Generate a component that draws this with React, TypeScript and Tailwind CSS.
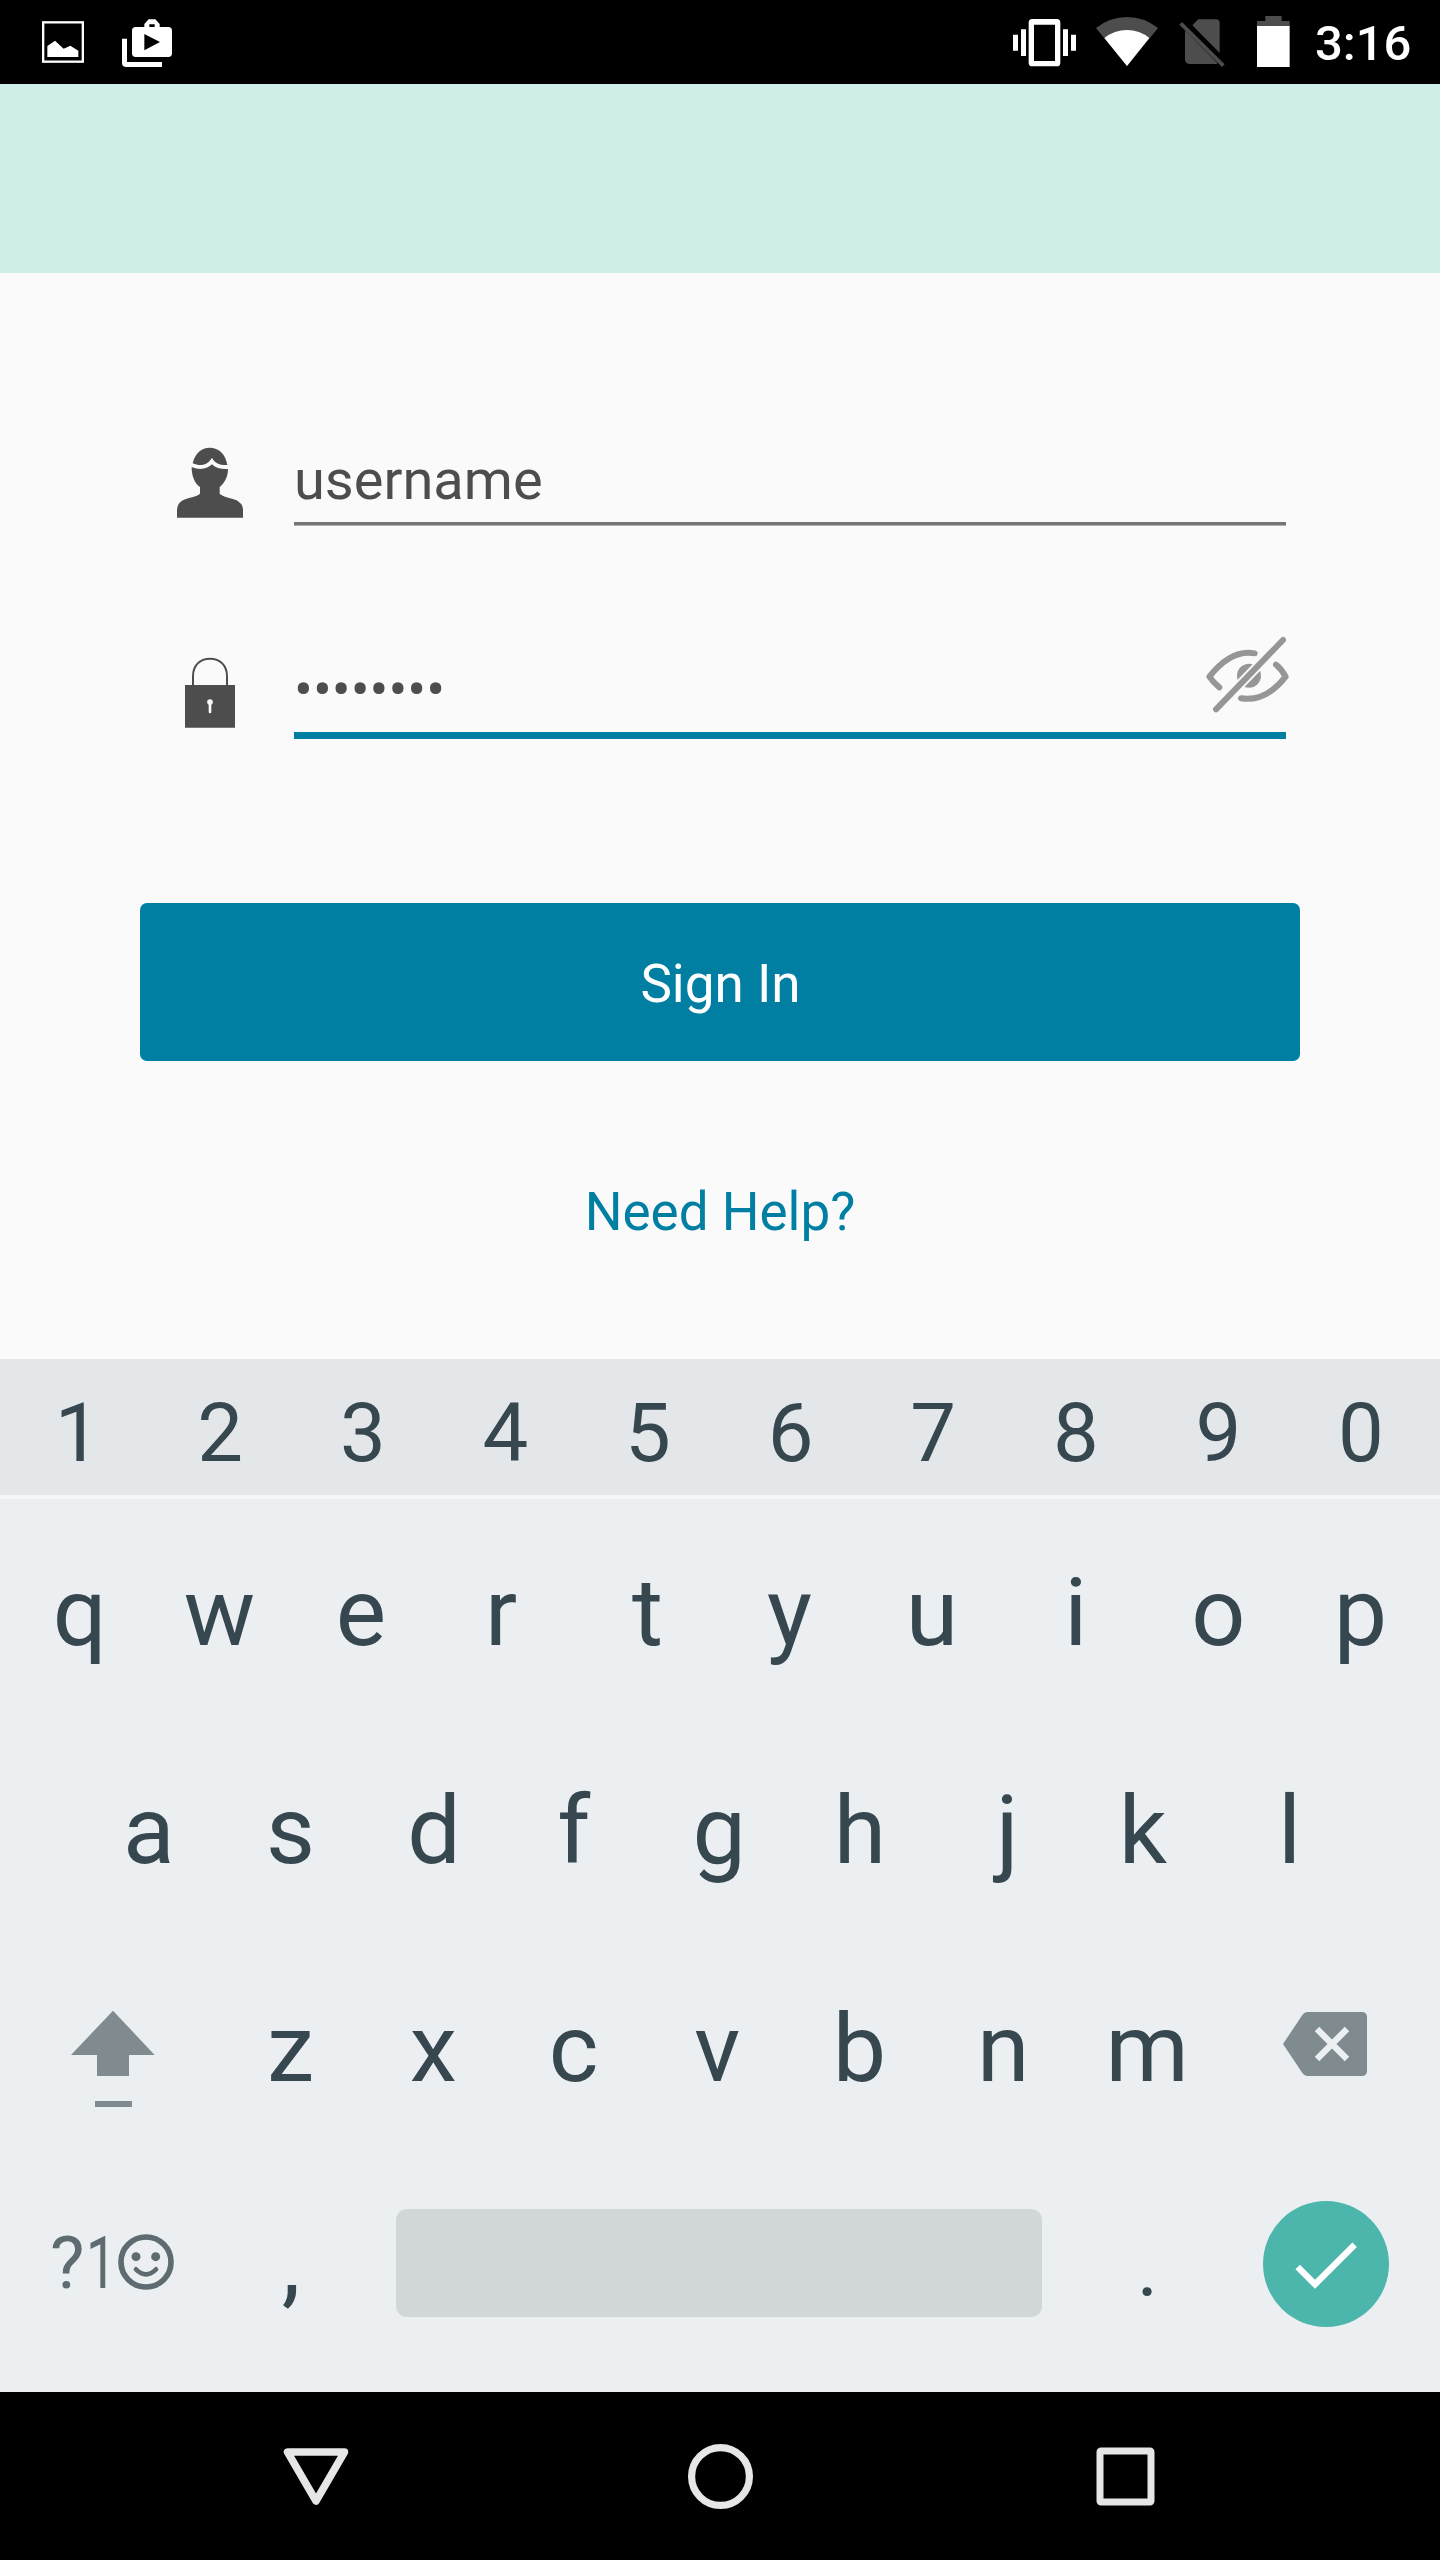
import type { ReactNode } from "react";

type GlyphProps = { className: string; viewBox: string; children: ReactNode };

function Glyph({ className, viewBox, children }: GlyphProps) {
  return (
    <svg className={"block shrink-0 " + className} viewBox={viewBox} fill="none" aria-hidden="true">
      {children}
    </svg>
  );
}

function StatusBar() {
  return (
    <div className="flex h-[84px] items-start bg-black text-white">
      <Glyph className="ml-[40px] h-[84px] w-[46px]" viewBox="120 0 138 252">
        <rect x="129.500" y="67" width="119" height="118" stroke="#fff" strokeWidth="7" />
        <path d="M142 138 165 122 191 146 211 137 235 152V171H142Z" fill="#fff" />
      </Glyph>
      <Glyph className="ml-[34px] h-[84px] w-[54px]" viewBox="360 0 162 252">
        <path
          fillRule="evenodd"
          fill="#fff"
          d="M407 81H433V72L446 58H466L479 72V81H505Q516 81 516 92V160Q516 171 505 171H407Q396 171 396 160V92Q396 81 407 81ZM448 73V81H464V73ZM433 102V151L480 126Z"
        />
        <path d="M366 116H381V186H486V201H379Q366 201 366 188Z" fill="#fff" />
      </Glyph>
      <Glyph className="ml-auto h-[84px] w-[66px]" viewBox="96 0 198 252">
        <path
          fillRule="evenodd"
          fill="#fff"
          d="M157 57H230Q241 57 241 68V188Q241 199 230 199H157Q146 199 146 188V68Q146 57 157 57ZM162 74V183H225V74Z"
        />
        <path d="M99 104H114V152H99ZM123 88H138V168H123ZM249 88H264V168H249ZM273 104H288V152H273Z" fill="#fff" />
      </Glyph>
      <Glyph className="ml-[17px] h-[84px] w-[64px]" viewBox="345 0 192 252">
        <path d="M348 84Q390 51 441 51Q492 51 534 84L441 198Z" fill="#4d4d4d" />
        <path d="M373 114Q403 90 441 90Q479 90 508 114L441 198Z" fill="#fff" />
      </Glyph>
      <Glyph className="ml-[20px] h-[84px] w-[48px]" viewBox="597 0 144 252">
        <path d="M655 58H708Q719 58 719 69V159L637 76ZM615 91 713 190Q711 192 707 192H631Q615 192 615 178Z" fill="#4d4d4d" />
        <path d="M602 70 730 197" stroke="#4d4d4d" strokeWidth="11" />
      </Glyph>
      <Glyph className="ml-[30px] h-[84px] w-[34px]" viewBox="831 0 102 252">
        <path d="M856 48H905V63H929V78H831V63H856Z" fill="#4d4d4d" />
        <path d="M831 78H929V201H831Z" fill="#fff" />
      </Glyph>
      <div className="ml-[24px] w-[125px] text-[49px] leading-[88px] font-medium">3:16</div>
    </div>
  );
}

function PersonIcon() {
  return (
    <Glyph className="h-[72px] w-[66px]" viewBox="171 82 198 216">
      <path
        d="M218 131C225 101 245 84 269 84C296 84 317 103 322 136C302 137 285 133 276 114C266 131 247 144 218 131Z"
        fill="#4d4d4d"
      />
      <path
        d="M215 142C238 152 260 149 276 134C288 146 304 149 324 148C324 171 314 190 299 202V222C307 231 337 236 348 241C364 250 369 258 369 273V294H171V273C171 258 177 248 190 241C204 234 231 231 240 222V202C224 191 215 170 215 142Z"
        fill="#4d4d4d"
      />
    </Glyph>
  );
}

function LockIcon() {
  return (
    <Glyph className="h-[72px] w-[66px]" viewBox="171 712 198 216">
      <path d="M219 798V770C219 737 240 717 270 717C300 717 321 737 321 770V798" stroke="#4d4d4d" strokeWidth="6" />
      <path d="M195 796H345V924H195Z" fill="#4d4d4d" />
      <circle cx="270" cy="847" r="8.500" fill="#fafafa" />
      <path d="M270 847V877" stroke="#fafafa" strokeWidth="8" strokeLinecap="round" />
    </Glyph>
  );
}

function HiddenEyeIcon() {
  return (
    <Glyph className="h-[80px] w-[86px]" viewBox="315 406 258 240">
      <g stroke="#969696" strokeWidth="18" strokeLinecap="round" strokeLinejoin="round">
        <path d="M464 461C411 451 367 482 328 531Q341 550 358 563" />
        <path d="M528 495Q544 508 557 531C524 573 481 605 423 596" />
      </g>
      <circle cx="447" cy="528" r="36" fill="#969696" />
      <path d="M549 421 348 629" stroke="#fafafa" strokeWidth="30" />
      <path d="M549 421 348 629" stroke="#969696" strokeWidth="18" strokeLinecap="round" />
    </Glyph>
  );
}

function LoginForm() {
  return (
    <div className="flex h-[1086px] flex-col bg-[#fafafa] px-[140px] pt-[167px] text-[#4d4d4d]">
      <div className="flex h-[86px] pl-[37px]">
        <div className="pt-[7px]">
          <PersonIcon />
        </div>
        <div className="ml-[51px] h-[85px] w-[992px] border-b-[3px] border-[#757575] text-[56px] leading-[80px] shadow-[0_1px_0_#b0b0b0]">
          username
        </div>
      </div>
      <div className="mt-[124px] flex h-[89px] pl-[37px]">
        <div className="pt-[7px]">
          <LockIcon />
        </div>
        <div className="ml-[51px] flex h-[89px] w-[992px] border-b-[7px] border-[#007fa3]">
          <div className="text-[56px] leading-[80px]">••••••••</div>
          <div className="-mt-[15px] -mr-[5px] ml-auto">
            <HiddenEyeIcon />
          </div>
        </div>
      </div>
      <div className="mt-[164px] flex h-[158px] items-center justify-center rounded-[7px] bg-[#007fa3] pt-[5px] pl-px text-[53px] text-white">
        Sign In
      </div>
      <div className="mt-[111px] text-center text-[53px] leading-[80px] text-[#007fa3]">Need Help?</div>
    </div>
  );
}

const opticalShift: Record<string, number> = {
  q: 2, w: -0.7, e: -1.8, r: -4.4, t: -0.5, y: -1, u: -1.3, p: -0.6,
  a: 0, s: -0.9, d: 0, f: -3, h: -1.9, j: 3, k: -4.2,
  z: -1, x: -0.7, c: -3, v: -2, b: -2.4, n: -1.2,
};

function Keys({ chars }: { chars: string }) {
  return (
    <>
      {chars.split("").map((c) => (
        <div
          key={c}
          className="w-[142.600px] shrink-0 text-center"
          style={{ transform: `translateX(${opticalShift[c] ?? 0}px)` }}
        >
          {c}
        </div>
      ))}
    </>
  );
}

function Keyboard() {
  return (
    <div className="h-[1033px] bg-[#ebeff2] text-[#37474f]">
      <div className="flex h-[136px] items-center justify-center bg-[#e3e7ea] pt-3 pr-[1.400px] text-[81.500px]">
        <Keys chars="1234567890" />
      </div>
      <div className="h-1 bg-[#f5f8fa]" />
      <div className="pt-[5px] pr-[1.400px] text-[95px] leading-[218px]">
        <div className="flex h-[218px] justify-center">
          <Keys chars="qwertyuiop" />
        </div>
        <div className="flex h-[218px] justify-center">
          <Keys chars="asdfghjkl" />
        </div>
        <div className="flex h-[218px] justify-center">
          <div className="flex w-[213px] justify-center pt-[69px] pr-[2px]">
            <Glyph className="h-[100px] w-[86px]" viewBox="210 147 258 300">
              <path d="M339 152 464 285H387V348H291V285H213ZM285 423H396V441H285Z" fill="#808b8f" />
            </Glyph>
          </div>
          <Keys chars="zxcvbnm" />
          <div className="flex w-[213px] justify-center pt-[70px]">
            <Glyph className="h-[68px] w-[86px]" viewBox="966 150 258 204">
              <path
                d="M969 252 1027 165Q1033 156 1042 156H1205Q1221 156 1221 172V332Q1221 348 1205 348H1042Q1033 348 1027 339Z"
                fill="#808b8f"
              />
              <path d="M1071 207 1161 297M1161 207 1071 297" stroke="#ebeff2" strokeWidth="19" />
            </Glyph>
          </div>
        </div>
      </div>
      <div className="-mt-px flex h-[212px] items-center justify-center pr-[2px] text-[95px] leading-[212px]">
        <div className="flex h-[212px] w-[214px] items-center pl-[45px] text-[#5e6b70]">
          <div className="w-[36px] text-[73px]">?</div>
          <div className="w-[31px] origin-left scale-x-[0.740] text-[73px]">1</div>
          <Glyph className="-mt-[3px] h-[58px] w-[58px]" viewBox="351 820 174 174">
            <circle cx="438" cy="907" r="75" stroke="#5e6b70" strokeWidth="17" />
            <circle cx="408" cy="891" r="13.500" fill="#5e6b70" />
            <circle cx="467" cy="891" r="13.500" fill="#5e6b70" />
            <path d="M408 929Q438 959 468 929" stroke="#5e6b70" strokeWidth="14" strokeLinecap="round" />
          </Glyph>
        </div>
        <div className="w-[143px] pl-px text-center">,</div>
        <div className="flex w-[714px] justify-center">
          <div className="h-[108px] w-[646px] rounded-[11px] bg-[#d1d6d9]" />
        </div>
        <div className="w-[143px] pt-[9px] text-center text-[81.500px]">.</div>
        <div className="flex w-[214px] justify-center pt-px">
          <Glyph className="h-[126px] w-[126px]" viewBox="908 724 378 378">
            <circle cx="1097" cy="913" r="189" fill="#4db6ac" />
            <path d="M1012 922 1064 974 1183 855" stroke="#fff" strokeWidth="19" />
          </Glyph>
        </div>
      </div>
    </div>
  );
}

function NavigationBar() {
  return (
    <div className="flex h-[168px] items-center justify-center bg-black">
      <div className="flex w-[405px] justify-center pl-px">
        <Glyph className="h-[68px] w-[68px]" viewBox="0 0 68 68">
          <path d="M5.500 10H62.500L34 59Z" stroke="#e6e6e6" strokeWidth="7.500" strokeLinejoin="round" />
        </Glyph>
      </div>
      <div className="flex w-[405px] justify-center">
        <Glyph className="h-[68px] w-[68px]" viewBox="0 0 68 68">
          <circle cx="34.500" cy="34.500" r="28.900" stroke="#e6e6e6" strokeWidth="7.200" />
        </Glyph>
      </div>
      <div className="flex w-[405px] justify-center">
        <Glyph className="h-[68px] w-[68px]" viewBox="0 0 68 68">
          <rect x="9" y="9" width="51" height="51" rx="1" stroke="#e6e6e6" strokeWidth="7" strokeLinejoin="round" />
        </Glyph>
      </div>
    </div>
  );
}

export default function App() {
  return (
    <div className="h-[2560px] w-[1440px] overflow-hidden font-['Roboto',sans-serif]">
      <StatusBar />
      <div className="h-[189px] bg-[#cfeee7]" />
      <LoginForm />
      <Keyboard />
      <NavigationBar />
    </div>
  );
}
